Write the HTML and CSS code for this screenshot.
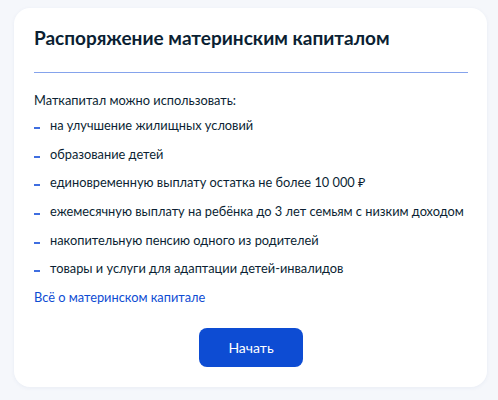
FILE: index.html
```html
<!DOCTYPE html>
<html lang="ru">
<head>
<meta charset="utf-8">
<link rel="stylesheet" href="styles.css">
</head>
<body>
<div class="card">
  <h2 class="title">Распоряжение материнским капиталом</h2>
  <div class="divider"></div>
  <p class="lead">Маткапитал можно использовать:</p>
  <ul class="list">
    <li>на улучшение жилищных условий</li>
    <li>образование детей</li>
    <li>единовременную выплату остатка не более 10&nbsp;000&nbsp;₽</li>
    <li>ежемесячную выплату на ребёнка до 3 лет семьям с низким доходом</li>
    <li>накопительную пенсию одного из родителей</li>
    <li>товары и услуги для адаптации детей-инвалидов</li>
  </ul>
  <a class="link" href="#">Всё о материнском капитале</a>
  <div class="actions">
    <button class="btn">Начать</button>
  </div>
</div>
</body>
</html>
```
FILE: styles.css
```css
html, body {
  margin: 0;
  padding: 0;
}
body {
  background: #f5f7fb;
  font-family: Lato, "Noto Sans", sans-serif;
  color: #0b1f33;
  width: 498px;
  height: 400px;
  overflow: hidden;
}
.card {
  margin: 8px 0 0 14px;
  width: 473px;
  height: 379px;
  box-sizing: border-box;
  background: #fff;
  border-radius: 16px;
  box-shadow: 0 1px 4px rgba(30, 60, 140, 0.06);
  padding: 16px 19px 0 20px;
}
.title {
  margin: 0;
  font-size: 19px;
  font-weight: 700;
  line-height: 28px;
  height: 28px;
  white-space: nowrap;
}
.divider {
  margin-top: 20px;
  height: 1px;
  background: #85a3ec;
}
.lead {
  margin: 17px 0 0 0;
  font-size: 12.8px;
  line-height: 20px;
}
.list {
  list-style: none;
  margin: 5px 0 0 0;
  padding: 0;
  display: flex;
  flex-direction: column;
  gap: 8.7px;
}
.list li {
  position: relative;
  padding-left: 16px;
  font-size: 12.8px;
  line-height: 20px;
  white-space: nowrap;
}
.list li::before {
  content: "";
  position: absolute;
  left: 0;
  top: 12px;
  width: 6px;
  height: 2px;
  background: #3f6ee0;
}
.link {
  display: block;
  margin-top: 8.7px;
  font-size: 12.8px;
  line-height: 20px;
  color: #0d4cd3;
  text-decoration: none;
}
.actions {
  display: flex;
  justify-content: center;
  margin-top: 21px;
}
.btn {
  width: 104px;
  height: 39px;
  border: 0;
  border-radius: 8px;
  background: #0d4cd3;
  color: #fff;
  font-family: Lato, "Noto Sans", sans-serif;
  font-size: 14px;
}
```
